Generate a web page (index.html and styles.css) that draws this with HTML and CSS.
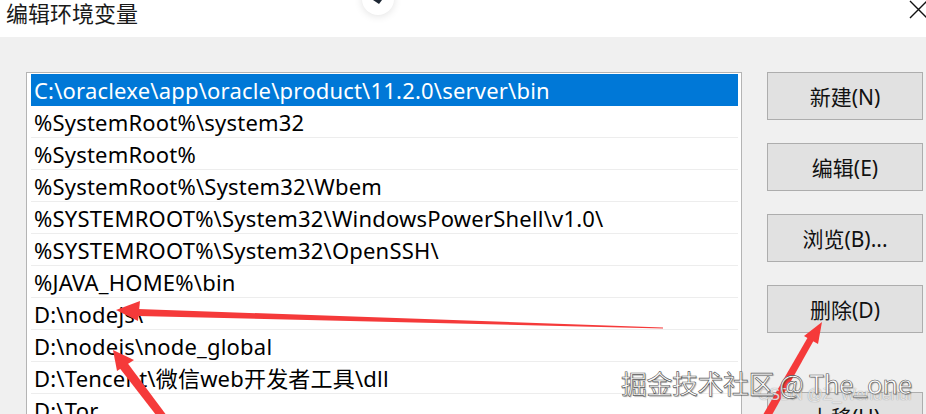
FILE: index.html
```html
<!DOCTYPE html>
<html lang="zh">
<head>
<meta charset="utf-8">
<title>编辑环境变量</title>
<link rel="stylesheet" href="styles.css">
</head>
<body>
<div class="window">
  <div class="titlebar">
    <span class="title">编辑环境变量</span>
    <span class="close">
      <svg width="20" height="20" viewBox="0 0 20 20"><path d="M2 1 L19 18 M19 1 L2 18" stroke="#111" stroke-width="1.4" fill="none"/></svg>
    </span>
  </div>
  <div class="content">
    <div class="list">
      <div class="row selected">C:\oraclexe\app\oracle\product\11.2.0\server\bin</div>
      <div class="row">%SystemRoot%\system32</div>
      <div class="row">%SystemRoot%</div>
      <div class="row">%SystemRoot%\System32\Wbem</div>
      <div class="row">%SYSTEMROOT%\System32\WindowsPowerShell\v1.0\</div>
      <div class="row">%SYSTEMROOT%\System32\OpenSSH\</div>
      <div class="row">%JAVA_HOME%\bin</div>
      <div class="row">D:\nodejs\</div>
      <div class="row">D:\nodejs\node_global</div>
      <div class="row">D:\Tencent\微信web开发者工具\dll</div>
      <div class="row">D:\Tor</div>
    </div>
    <div class="buttons">
      <div class="btn">新建(N)</div>
      <div class="btn">编辑(E)</div>
      <div class="btn">浏览(B)...</div>
      <div class="btn">删除(D)</div>
      <div class="btn btn-gap">上移(U)</div>
    </div>
  </div>
  <div class="bubble">
    <svg width="32" height="32" viewBox="0 0 32 32"><path d="M11 17 L20 17 L17 21 Z" fill="#1d2733"/></svg>
  </div>
  <svg class="arrows" width="926" height="414" viewBox="0 0 926 414">
    <polygon points="663,327.5 663,328.5 138,316 138,309" fill="#f53a3a"/>
    <polygon points="116,310 140,301 138,321" fill="#f53a3a"/>
    <polygon points="170,420 163,424 118,366 126,361" fill="#f53a3a"/>
    <polygon points="113,350 134,360 117,371" fill="#f53a3a"/>
    <polygon points="760,420 768,422 814,340 808,337" fill="#f53a3a"/>
    <polygon points="822,322 818,344 804,336" fill="#f53a3a"/>
  </svg>
  <div class="wm-csdn">CSDN @Z_Wendenui</div>
  <div class="wm-juejin">掘金技术社区 @ The_one</div>
</div>
</body>
</html>
```

FILE: styles.css
```css
html, body {
  margin: 0;
  padding: 0;
}
body {
  width: 926px;
  height: 414px;
  overflow: hidden;
  font-family: "Noto Sans", "Noto Sans CJK SC", sans-serif;
  color: #000;
}
.window {
  position: relative;
  width: 926px;
  height: 414px;
  overflow: hidden;
  background: #f0f0f0;
}
.titlebar {
  height: 37px;
  background: #fff;
  display: flex;
  align-items: flex-start;
  justify-content: space-between;
}
.title {
  font-family: "Noto Sans CJK SC", sans-serif;
  font-size: 22px;
  line-height: 24px;
  padding-left: 6px;
  color: #1a1a1a;
}
.close {
  margin-right: -2px;
  display: flex;
}
.content {
  display: flex;
  align-items: flex-start;
  padding: 35px 0 0 26px;
}
.list {
  width: 707px;
  height: 360px;
  border: 1px solid #b4b4b4;
  background: #fff;
  padding: 1px 3px 0 4px;
  flex: none;
}
.row {
  height: 31px;
  line-height: 33px;
  border-bottom: 1px solid #ededed;
  padding-left: 3px;
  font-size: 22px;
  white-space: nowrap;
  letter-spacing: 0.2px;
  overflow: hidden;
}
.row.selected {
  background: #0078d7;
  color: #fff;
  border-bottom-color: #0078d7;
}
.buttons {
  margin-left: 25px;
  display: flex;
  flex-direction: column;
  gap: 23px;
  width: 156px;
  flex: none;
}
.btn {
  height: 46px;
  border: 1px solid #adadad;
  background: #e1e1e1;
  display: flex;
  align-items: center;
  justify-content: center;
  font-size: 21px;
  color: #111;
}
.btn-gap {
  margin-top: 36px;
}
.bubble {
  position: absolute;
  left: 362px;
  top: -17px;
  width: 32px;
  height: 32px;
  border-radius: 50%;
  background: #fff;
  box-shadow: 0 1px 8px rgba(0,0,0,0.12);
}
.bubble svg {
  display: block;
}
.arrows {
  position: absolute;
  left: 0;
  top: 0;
}
.wm-csdn {
  position: absolute;
  left: 758px;
  top: 386px;
  font-family: "Liberation Sans", sans-serif;
  font-size: 16px;
  color: rgba(255,255,255,0.75);
  text-shadow: 0 0 1px rgba(90,90,90,0.7);
  letter-spacing: -0.2px;
}
.wm-juejin {
  position: absolute;
  left: 621px;
  top: 366px;
  font-family: "Noto Sans CJK SC", sans-serif;
  font-size: 26px;
  line-height: 34px;
  color: #fff;
  -webkit-text-stroke: 0.6px #555;
  text-shadow: 1px 1px 1px rgba(0,0,0,0.3);
  letter-spacing: -0.5px;
}
```
